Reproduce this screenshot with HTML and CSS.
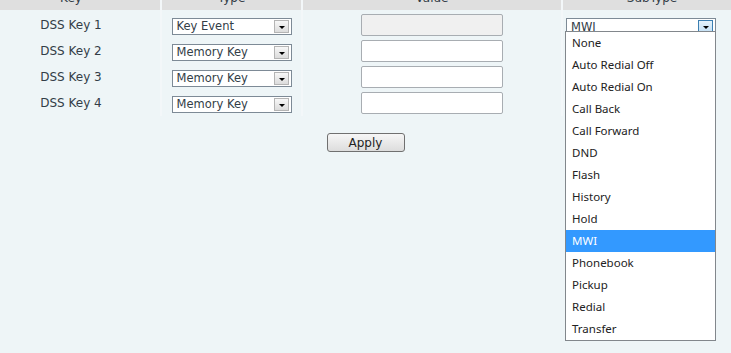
FILE: index.html
```html
<!DOCTYPE html>
<html lang="en">
<head>
<meta charset="UTF-8">
<title>DSS Keys</title>
<link rel="stylesheet" href="styles.css">
</head>
<body>

<table class="dss-table">
  <thead>
    <tr>
      <th class="col-key">Key</th>
      <th class="col-type">Type</th>
      <th class="col-value">Value</th>
      <th class="col-sub">SubType</th>
    </tr>
  </thead>
  <tbody>
    <tr class="first-row">
      <td class="key-name">DSS Key 1</td>
      <td class="center"><span class="combo type-combo"><span class="combo-text">Key Event</span><span class="combo-arrow"></span></span></td>
      <td class="center"><span class="text-field disabled"></span></td>
      <td class="sub-cell">
        <div class="combo-wrap">
          <span class="combo sub-combo open"><span class="combo-text">MWI</span><span class="combo-arrow"></span></span>
          <ul class="combo-list">
            <li>None</li>
            <li>Auto Redial Off</li>
            <li>Auto Redial On</li>
            <li>Call Back</li>
            <li>Call Forward</li>
            <li>DND</li>
            <li>Flash</li>
            <li>History</li>
            <li>Hold</li>
            <li class="selected">MWI</li>
            <li>Phonebook</li>
            <li>Pickup</li>
            <li>Redial</li>
            <li>Transfer</li>
          </ul>
        </div>
      </td>
    </tr>
    <tr>
      <td class="key-name">DSS Key 2</td>
      <td class="center"><span class="combo type-combo"><span class="combo-text">Memory Key</span><span class="combo-arrow"></span></span></td>
      <td class="center"><span class="text-field"></span></td>
      <td class="sub-cell"><span class="combo sub-combo"><span class="combo-arrow"></span></span></td>
    </tr>
    <tr>
      <td class="key-name">DSS Key 3</td>
      <td class="center"><span class="combo type-combo"><span class="combo-text">Memory Key</span><span class="combo-arrow"></span></span></td>
      <td class="center"><span class="text-field"></span></td>
      <td class="sub-cell"><span class="combo sub-combo"><span class="combo-arrow"></span></span></td>
    </tr>
    <tr>
      <td class="key-name">DSS Key 4</td>
      <td class="center"><span class="combo type-combo"><span class="combo-text">Memory Key</span><span class="combo-arrow"></span></span></td>
      <td class="center"><span class="text-field"></span></td>
      <td class="sub-cell"><span class="combo sub-combo"><span class="combo-arrow"></span></span></td>
    </tr>
  </tbody>
</table>

<div class="actions">
  <button class="apply-btn">Apply</button>
</div>

</body>
</html>
```

FILE: styles.css
```css
html {
  overflow: hidden;
}

body {
  margin: 0;
  min-height: 353px;
  background-color: #eef5f7;
  font-family: "DejaVu Sans", Verdana, sans-serif;
  color: #333d47;
}

/* tabela klawiszy DSS (przewinieta, naglowek uciety) */
.dss-table {
  border-collapse: separate;
  border-spacing: 2px 0;
  margin: -13px 0 0 -2px;
  table-layout: fixed;
  width: 745px;
  background-color: #f3f7f9;
}

.dss-table th {
  height: 22px;
  padding: 0;
  font-weight: normal;
  font-size: 12px;
  line-height: 23px;
  vertical-align: top;
  background-color: #dfdfdf;
  color: #333d47;
  overflow: hidden;
}

.dss-table th.col-key { width: 142px; padding-right: 18px; }
.col-type { width: 139px; }
.col-value { width: 258px; }
.col-sub { width: 178px; }

.dss-table td {
  height: 26px;
  padding: 0;
  background-color: #eef5f7;
  vertical-align: middle;
}

.dss-table .first-row td {
  height: 26px;
  padding-top: 2px;
}

.dss-table td.key-name {
  text-align: center;
  padding-right: 18px;
  font-size: 12px;
}

.center {
  text-align: center;
}

.dss-table td.sub-cell {
  text-align: left;
  padding-left: 3px;
}

/* pola wyboru */
.combo {
  display: inline-flex;
  align-items: center;
  justify-content: space-between;
  box-sizing: border-box;
  height: 17px;
  border: 1px solid #7d8a96;
  background-color: #fff;
  vertical-align: middle;
  text-align: left;
}

.type-combo {
  width: 120px;
}

.sub-combo {
  width: 150px;
  height: 18px;
  justify-content: flex-end;
}

.sub-combo.open {
  height: 17px;
  justify-content: space-between;
}

.combo-text {
  font-size: 11.5px;
  padding-left: 4px;
  color: #333d47;
  white-space: nowrap;
}

.combo-arrow {
  position: relative;
  box-sizing: border-box;
  width: 15px;
  height: 13px;
  margin-right: 2px;
  border: 1px solid #b4b4b4;
  background: linear-gradient(#f7f7f7, #dcdcdc);
}

.combo-arrow::after {
  content: "";
  position: absolute;
  left: 4px;
  top: 5px;
  border-left: 3px solid transparent;
  border-right: 3px solid transparent;
  border-top: 3px solid #000;
}

.open .combo-arrow {
  border-color: #3c7fb1;
  background: linear-gradient(#e5f2fb, #c4e0f5);
}

.text-field {
  display: inline-block;
  box-sizing: border-box;
  width: 142px;
  height: 22px;
  border: 1px solid #a8adb2;
  border-radius: 2px;
  background-color: #fff;
  vertical-align: middle;
}

.text-field.disabled {
  background-color: #f0f0f0;
}

/* rozwinieta lista */
.combo-wrap {
  position: relative;
  display: inline-block;
  vertical-align: middle;
}

.combo-list {
  position: absolute;
  top: 15px;
  left: -1px;
  z-index: 10;
  width: 151px;
  box-sizing: border-box;
  margin: 0;
  padding: 0;
  list-style: none;
  border: 1px solid #82878c;
  background-color: #fff;
}

.combo-list li {
  height: 22px;
  line-height: 22px;
  padding-left: 6px;
  font-family: "Noto Sans", "Open Sans", sans-serif;
  font-size: 11.5px;
  color: #222;
  white-space: nowrap;
}

.combo-list li.selected {
  background-color: #3399ff;
  color: #fff;
}

.actions {
  display: flex;
  justify-content: center;
  margin-top: 17px;
}

.apply-btn {
  width: 78px;
  height: 19px;
  padding: 0;
  border: 1px solid #707070;
  border-radius: 3px;
  background: linear-gradient(#f6f6f6, #dddddd);
  font-family: "DejaVu Sans", Verdana, sans-serif;
  font-size: 12px;
  color: #222;
  line-height: 16px;
}
```
